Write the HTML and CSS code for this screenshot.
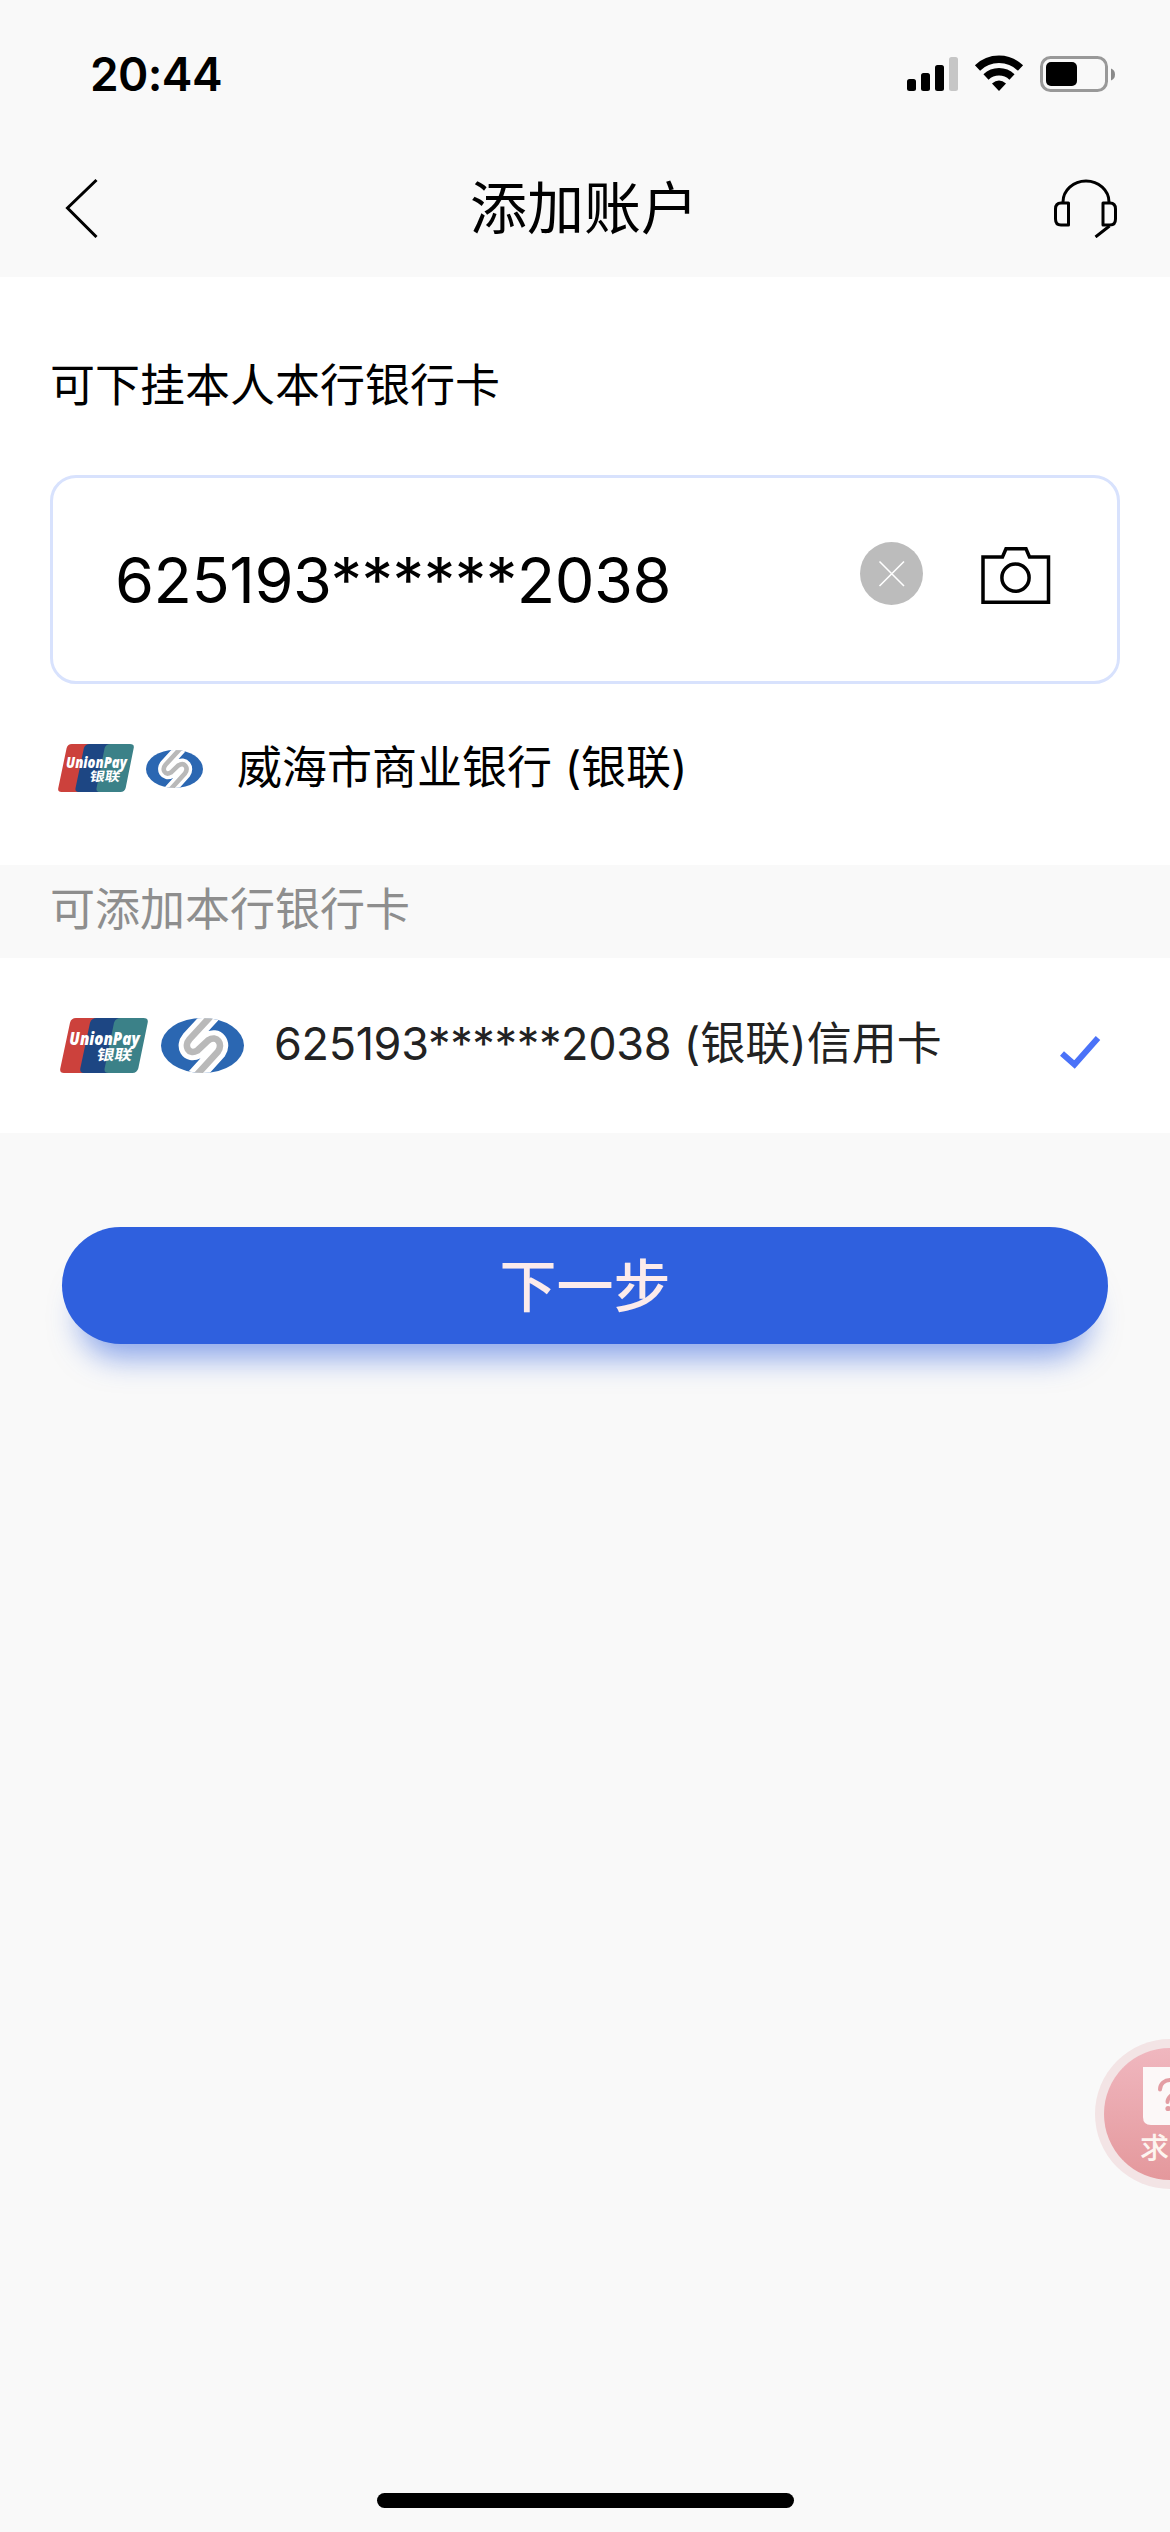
FILE: index.html
```html
<!DOCTYPE html>
<html lang="zh-CN">
<head>
<meta charset="utf-8">
<title>添加账户</title>
<link rel="stylesheet" href="styles.css">
</head>
<body>
<div class="screen">
  <div class="status">
    <span class="time">20:44</span>
    <svg width="210" height="40" viewBox="906 54 210 40">
      <rect x="907" y="79" width="9" height="12" rx="2.500"/>
      <rect x="921" y="73" width="9" height="18" rx="2.500"/>
      <rect x="935" y="65" width="9" height="26" rx="2.500"/>
      <rect x="949" y="57" width="9" height="34" rx="2.500" fill="#c6c6c6"/>
      <g fill="none" stroke="#000" stroke-width="7.500">
        <path d="M977.500 68A31 31 0 0 1 1020.500 68"/>
        <path d="M986 77A19 19 0 0 1 1012 77"/>
      </g>
      <path d="M992 83.500Q999 77.500 1006 83.500L999 91Z"/>
      <rect x="1041.500" y="57.500" width="65" height="33" rx="9" fill="none" stroke="#999" stroke-width="3"/>
      <rect x="1046" y="62" width="31" height="24" rx="5"/>
      <path fill="#8a8a8a" d="M1111 68.500Q1115 70 1115 74.500T1111 80.500Z"/>
    </svg>
  </div>

  <div class="nav">
    <svg width="34" height="60" viewBox="65 178 34 60"><path d="M96.500 180L67.500 208L96.500 237" fill="none" stroke="#000" stroke-width="3"/></svg>
    <h1>添加账户</h1>
    <svg width="66" height="60" viewBox="1053 179 66 60" fill="none" stroke="#000" stroke-width="3">
      <path d="M1063 203A23 21 0 0 1 1109 203M1109.500 227L1095.500 238"/>
      <path d="M1061 204H1068.500V226H1061Q1055.500 226 1055.500 220V210Q1055.500 204 1061 204ZM1103 204H1110Q1115.500 204 1115.500 210V220Q1115.500 226 1110 226H1103Z" stroke-linejoin="round"/>
    </svg>
  </div>

  <div class="card">
    <p class="label">可下挂本人本行银行卡</p>
    <div class="field">
      <span class="number">625193******2038</span>
      <svg class="clear" width="63" height="63" viewBox="0 0 63 63"><circle cx="31.500" cy="31.500" r="31.500" fill="#bcbcbc"/><path d="M19.500 19.500L44 44M44 19.500L19.500 44" stroke="#fff" stroke-width="1.600"/></svg>
      <svg class="camera" width="70" height="58" viewBox="982 547 70 58" fill="none" stroke="#000" stroke-width="3.500"><path d="M984 557H1003.500L1007 548.800H1027L1030.500 557H1049.500V602.200H984Z"/><circle cx="1016.500" cy="577.700" r="13.600"/></svg>
    </div>
    <div class="bank">
      <svg width="76" height="48" viewBox="0 0 264 165" preserveAspectRatio="none">
        <path fill="#cc413c" d="M48 0H130L90 165H12Q-2 165 1 151L30 14Q34 0 48 0Z"/>
        <path fill="#1d4683" d="M110 0H200L160 165H72Q58 165 61 151L90 14Q95 0 110 0Z"/>
        <path fill="#3b8188" d="M182 0H250Q266 0 263 14L235 151Q231 165 217 165H146Q131 165 134 151L162 14Q167 0 182 0Z"/>
        <text class="logo-latin" x="28" y="81" textLength="211" lengthAdjust="spacingAndGlyphs">UnionPay</text>
        <text class="logo-cjk" transform="translate(108 127) skewX(-10)" textLength="106" lengthAdjust="spacingAndGlyphs">银联</text>
      </svg>
      <svg class="small-oval" width="57" height="38" viewBox="0 0 248 165" preserveAspectRatio="none">
        <clipPath id="oval-small"><ellipse cx="124" cy="82.500" rx="124" ry="82.500"/></clipPath>
        <g clip-path="url(#oval-small)" fill="none">
          <rect width="248" height="165" fill="#2b67b2"/>
          <path stroke="#fff" stroke-width="50" d="M153 -10L85 64C68 84 82 112 108 98L141 67C168 50 186 78 170 101L102 176"/>
          <path stroke="#b9b9b9" stroke-width="20" d="M153 -10L85 64C68 84 82 112 108 98L141 67C168 50 186 78 170 101L102 176"/>
        </g>
      </svg>
      <span>威海市商业银行 (银联)</span>
    </div>
  </div>

  <div class="section">可添加本行银行卡</div>

  <div class="option">
    <svg width="88" height="55" viewBox="0 0 264 165" preserveAspectRatio="none">
      <path fill="#cc413c" d="M48 0H130L90 165H12Q-2 165 1 151L30 14Q34 0 48 0Z"/>
      <path fill="#1d4683" d="M110 0H200L160 165H72Q58 165 61 151L90 14Q95 0 110 0Z"/>
      <path fill="#3b8188" d="M182 0H250Q266 0 263 14L235 151Q231 165 217 165H146Q131 165 134 151L162 14Q167 0 182 0Z"/>
      <text class="logo-latin" x="28" y="81" textLength="211" lengthAdjust="spacingAndGlyphs">UnionPay</text>
      <text class="logo-cjk" transform="translate(108 127) skewX(-10)" textLength="106" lengthAdjust="spacingAndGlyphs">银联</text>
    </svg>
    <svg class="big-oval" width="83" height="55" viewBox="0 0 248 165" preserveAspectRatio="none">
      <clipPath id="oval-big"><ellipse cx="124" cy="82.500" rx="124" ry="82.500"/></clipPath>
      <g clip-path="url(#oval-big)" fill="none">
        <rect width="248" height="165" fill="#2b67b2"/>
        <path stroke="#fff" stroke-width="50" d="M153 -10L85 64C68 84 82 112 108 98L141 67C168 50 186 78 170 101L102 176"/>
        <path stroke="#b9b9b9" stroke-width="20" d="M153 -10L85 64C68 84 82 112 108 98L141 67C168 50 186 78 170 101L102 176"/>
      </g>
    </svg>
    <span class="option-text"><span class="digits">625193******2038</span> (银联)信用卡</span>
    <svg class="check" width="41" height="33" viewBox="0 0 41 33"><path d="M2 17.500L14.500 28.500L38 2" fill="none" stroke="#4a72f8" stroke-width="6"/></svg>
  </div>

  <button class="next">下一步</button>
</div>

<div class="help">
  <svg width="66" height="132" viewBox="1104 2048 66 132">
    <path d="M1143 2067H1170V2125H1151Q1143 2125 1143 2117Z" fill="#fcf8f8"/>
    <path d="M1160 2089.500C1160 2077 1180 2077 1179 2088C1178 2093 1167.500 2094 1167.500 2102" fill="none" stroke="#e39da3" stroke-width="4" stroke-linecap="round"/>
    <circle cx="1168" cy="2108.500" r="2.600" fill="#e39da3"/>
  </svg>
  <span>求</span>
</div>
<div class="home"></div>
</body>
</html>
```
FILE: styles.css
```css
* { box-sizing: border-box; }

body {
  margin: 0;
  width: 1170px;
  height: 2532px;
  position: relative;
  overflow: hidden;
  background: #f9f9f9;
  color: #000;
  font-family: "Inter", "Noto Sans CJK SC", sans-serif;
  font-size: 45px;
  line-height: 60px;
}

svg { display: block; flex: none; }

.logo-latin { font: italic 800 52px "Open Sans", sans-serif; fill: #fff; }
.logo-cjk { font: 700 44px "Noto Sans CJK SC", sans-serif; fill: #fff; }

.screen { display: flex; flex-direction: column; }

.status {
  height: 139px;
  padding: 54px 54px 0 90px;
  display: flex;
  justify-content: space-between;
  align-items: flex-start;
}
.time { font-size: 46px; font-weight: 600; line-height: 41px; letter-spacing: -.6px; }

.nav {
  height: 138px;
  padding: 0 51px 0 65px;
  display: grid;
  grid-template-columns: 50px 1fr 66px;
  align-items: center;
}
h1 {
  margin: 0;
  padding-top: 1px;
  font-size: 57px;
  font-weight: 400;
  text-align: center;
}

.card {
  height: 588px;
  padding: 79px 50px 0;
  background: #fff;
}
.label { margin: 0 0 59px; }

.field {
  height: 209px;
  padding: 0 66px 8px 62px;
  display: flex;
  align-items: center;
  border: 3px solid #d8e2fd;
  border-radius: 26px;
}
.number {
  width: 746px;
  padding-top: 8px;
  font-size: 63px;
  letter-spacing: -.5px;
  white-space: nowrap;
}
.field .clear { margin-bottom: 4px; }
.field .camera { margin: 0 0 0 58px; }

.bank {
  margin-top: 54px;
  padding-left: 8px;
  display: flex;
  align-items: center;
}
.small-oval { margin: 2px 34px 0 12px; }

.section {
  height: 93px;
  padding: 15px 50px;
  color: #8e8e8e;
}

.option {
  height: 175px;
  padding: 0 69px 0 60px;
  display: flex;
  align-items: center;
  background: #fff;
  color: #222;
}
.big-oval { margin: 0 30px 0 13px; }
.option-text { padding-bottom: 3px; white-space: nowrap; }
.digits { letter-spacing: -.35px; }
.check { margin: 13px 0 0 auto; }

.next {
  height: 117px;
  margin: 94px 62px 0;
  padding: 0 0 8px;
  border: 0;
  border-radius: 59px;
  background: #2f60de;
  box-shadow: 0 32px 30px -18px rgba(47, 96, 222, .55);
  color: #fcebeb;
  font: 500 57px "Noto Sans CJK SC", sans-serif;
}

.help {
  position: absolute;
  left: 1095px;
  top: 2039px;
  width: 75px;
  height: 150px;
  border: 9px solid #f3e4e5;
  border-right: 0;
  border-radius: 75px 0 0 75px;
  background: linear-gradient(#f0b7bf, #e4989c);
}
.help span {
  position: absolute;
  left: 36px;
  top: 86px;
  color: #fdf5f0;
  font-size: 29px;
  font-weight: 500;
  line-height: 30px;
}

.home {
  position: absolute;
  left: 377px;
  top: 2493px;
  width: 417px;
  height: 15px;
  border-radius: 8px;
  background: #000;
}
```
